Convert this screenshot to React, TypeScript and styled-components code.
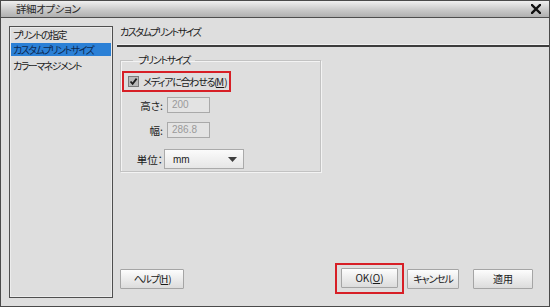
import styled, { createGlobalStyle } from 'styled-components'

const GlobalStyle = createGlobalStyle`
  html, body {
    margin: 0;
    padding: 0;
    background: #dcdcdc;
  }
  * {
    box-sizing: border-box;
  }
`

const Window = styled.div`
  width: 550px;
  height: 307px;
  display: flex;
  flex-direction: column;
  background: #dedede;
  border: 1px solid #4a4a4a;
  font-family: "Noto Sans CJK JP", "Liberation Sans", sans-serif;
  font-feature-settings: "palt";
  font-size: 10px;
  color: #1a1a1a;
  overflow: hidden;
`

const TitleBar = styled.div`
  height: 17px;
  flex: none;
  display: flex;
  align-items: center;
  justify-content: space-between;
  padding: 0 8px 0 15px;
  background: linear-gradient(#f0f0f0, #c6c6c6 60%, #b0b0b0);
  border-bottom: 1px solid #4d4d4d;
`

const Title = styled.span`
  font-size: 10.5px;
  letter-spacing: -0.4px;
  line-height: 1;
  color: #2a2a2a;
`

const CloseButton = styled.span`
  display: flex;
  width: 10px;
  height: 10px;
`

const Body = styled.div`
  flex: 1;
  display: flex;
  align-items: stretch;
`

const SideList = styled.ul`
  list-style: none;
  margin: 8px 0 8px 8px;
  padding: 1px 0 0;
  width: 104px;
  flex: none;
  border: 1px solid #4f4f4f;
  box-shadow: inset 0 0 0 1px #ececec;
  letter-spacing: -1.5px;
`

const SideItem = styled.li<{ $active?: boolean }>`
  height: ${p => (p.$active ? 13 : 14)}px;
  line-height: ${p => (p.$active ? 13 : 14)}px;
  padding-left: 2px;
  margin: 0 1px ${p => (p.$active ? 3 : 1)}px;
  white-space: nowrap;
  background: ${p => (p.$active ? '#2b80d6' : 'transparent')};
  color: ${p => (p.$active ? '#0d2a52' : '#1a1a1a')};
`

const Main = styled.div`
  flex: 1;
  display: flex;
  flex-direction: column;
  margin-left: 4px;
`

const PageHeader = styled.div`
  height: 29px;
  flex: none;
  display: flex;
  align-items: center;
  padding-left: 3px;
  margin-right: -1px;
  border-bottom: 2px solid #3c3c3c;
  box-shadow: 0 -1px 0 #f0f0f0 inset;
  letter-spacing: -1.5px;
`

const HeaderTitle = styled.span`
  padding-bottom: 1px;
`

const Content = styled.div`
  flex: 1;
  padding: 6px 0 0 3px;
`

const GroupBox = styled.fieldset`
  width: 201px;
  margin: 0;
  padding: 4px 1px 2px;
  border: 1px solid #c2c2c2;
  box-shadow: inset 1px 1px 0 #f3f3f3, 1px 1px 0 #f3f3f3;
`

const GroupTitle = styled.legend`
  margin-left: 11px;
  padding: 0 5px;
  line-height: 14px;
  letter-spacing: -1.3px;
  color: #1a1a1a;
`

const Highlight = styled.div`
  display: inline-flex;
  align-items: center;
  gap: 4px;
  height: 21px;
  padding: 0 3px 0 4px;
  border: 2px solid #d71f26;
  letter-spacing: -1.3px;
`

const CheckBox = styled.span`
  display: flex;
  width: 11px;
  height: 11px;
`

const AccessKey = styled.span`
  text-decoration: underline;
  text-underline-offset: 1px;
  letter-spacing: 0;
`

const FormRow = styled.div<{ $top: number }>`
  display: grid;
  grid-template-columns: 42px 1fr;
  align-items: center;
  margin-top: ${p => p.$top}px;
`

const FieldLabel = styled.span`
  text-align: right;
  white-space: nowrap;
  padding-right: 1px;
  font-size: 10.5px;
`

const TextBox = styled.div`
  width: 43px;
  height: 16px;
  margin-left: 3px;
  padding-left: 4px;
  border: 1px solid #a9a9a9;
  background: #e3e3e3;
  color: #9a9a9a;
  font-family: "Liberation Sans", Arial, sans-serif;
  font-size: 10px;
  line-height: 14px;
`

const SelectBox = styled.div`
  width: 80px;
  height: 20px;
  display: flex;
  align-items: center;
  justify-content: space-between;
  padding: 0 6px 0 8px;
  border: 1px solid #aaaaaa;
  background: linear-gradient(#fbfbfb, #e6e6e6);
  font-family: "Liberation Sans", Arial, sans-serif;
  font-size: 10px;
  color: #222;
`

const Footer = styled.div`
  flex: none;
  display: flex;
  align-items: center;
  justify-content: space-between;
  padding: 0 16px 12px 3px;
`

const ButtonGroup = styled.div`
  display: flex;
  align-items: center;
`

const Button = styled.button<{ $width: number; $tight?: boolean }>`
  width: ${p => p.$width}px;
  height: 20px;
  padding: 0;
  border: 1px solid #a5a5a5;
  border-radius: 1px;
  background: linear-gradient(#fdfdfd, #ececec 50%, #dcdcdc);
  font-family: "Noto Sans CJK JP", "Liberation Sans", sans-serif;
  font-feature-settings: "palt";
  font-size: 10px;
  letter-spacing: ${p => (p.$tight ? '-1.2px' : '0')};
  color: #1a1a1a;
  line-height: 1;
`

const ButtonFrame = styled.div`
  padding: 3px 4px 4px;
  border: 2px solid #d71f26;
  margin-right: 3px;
`

const Spacer = styled.span<{ $w: number }>`
  display: inline-block;
  width: ${p => p.$w}px;
`

export default function App() {
  return (
    <>
      <GlobalStyle />
      <Window>
        <TitleBar>
          <Title>詳細オプション</Title>
          <CloseButton>
            <svg width="10" height="10" viewBox="0 0 10 10">
              <path d="M1 1 L9 9 M9 1 L1 9" stroke="#111" strokeWidth="2.4" strokeLinecap="square" />
            </svg>
          </CloseButton>
        </TitleBar>
        <Body>
          <SideList>
            <SideItem>プリントの指定</SideItem>
            <SideItem $active>カスタムプリントサイズ</SideItem>
            <SideItem>カラーマネジメント</SideItem>
          </SideList>
          <Main>
            <PageHeader>
              <HeaderTitle>カスタムプリントサイズ</HeaderTitle>
            </PageHeader>
            <Content>
              <GroupBox>
                <GroupTitle>プリントサイズ</GroupTitle>
                <Highlight>
                  <CheckBox>
                    <svg width="11" height="11" viewBox="0 0 11 11">
                      <rect x="0.5" y="0.5" width="10" height="10" fill="#b9b9b9" stroke="#7a7a7a" />
                      <path d="M2.5 5.5 L4.6 7.8 L8.6 2.6" fill="none" stroke="#1e1e1e" strokeWidth="1.8" />
                    </svg>
                  </CheckBox>
                  <span>
                    メディアに合わせる(<AccessKey>M</AccessKey>)
                  </span>
                </Highlight>
                <FormRow $top={5}>
                  <FieldLabel>高さ:</FieldLabel>
                  <TextBox>200</TextBox>
                </FormRow>
                <FormRow $top={9}>
                  <FieldLabel>幅:</FieldLabel>
                  <TextBox>286.8</TextBox>
                </FormRow>
                <FormRow $top={11}>
                  <FieldLabel>単位：</FieldLabel>
                  <SelectBox>
                    <span>mm</span>
                    <svg width="9" height="5" viewBox="0 0 9 5">
                      <path d="M0 0 H9 L4.5 5 Z" fill="#3f3f3f" />
                    </svg>
                  </SelectBox>
                </FormRow>
              </GroupBox>
            </Content>
            <Footer>
              <Button $width={64} $tight>
                ヘルプ(<AccessKey>H</AccessKey>)
              </Button>
              <ButtonGroup>
                <ButtonFrame>
                  <Button $width={57}>
                    OK(<AccessKey>O</AccessKey>)
                  </Button>
                </ButtonFrame>
                <Button $width={52} $tight>キャンセル</Button>
                <Spacer $w={14} />
                <Button $width={60}>適用</Button>
              </ButtonGroup>
            </Footer>
          </Main>
        </Body>
      </Window>
    </>
  )
}
